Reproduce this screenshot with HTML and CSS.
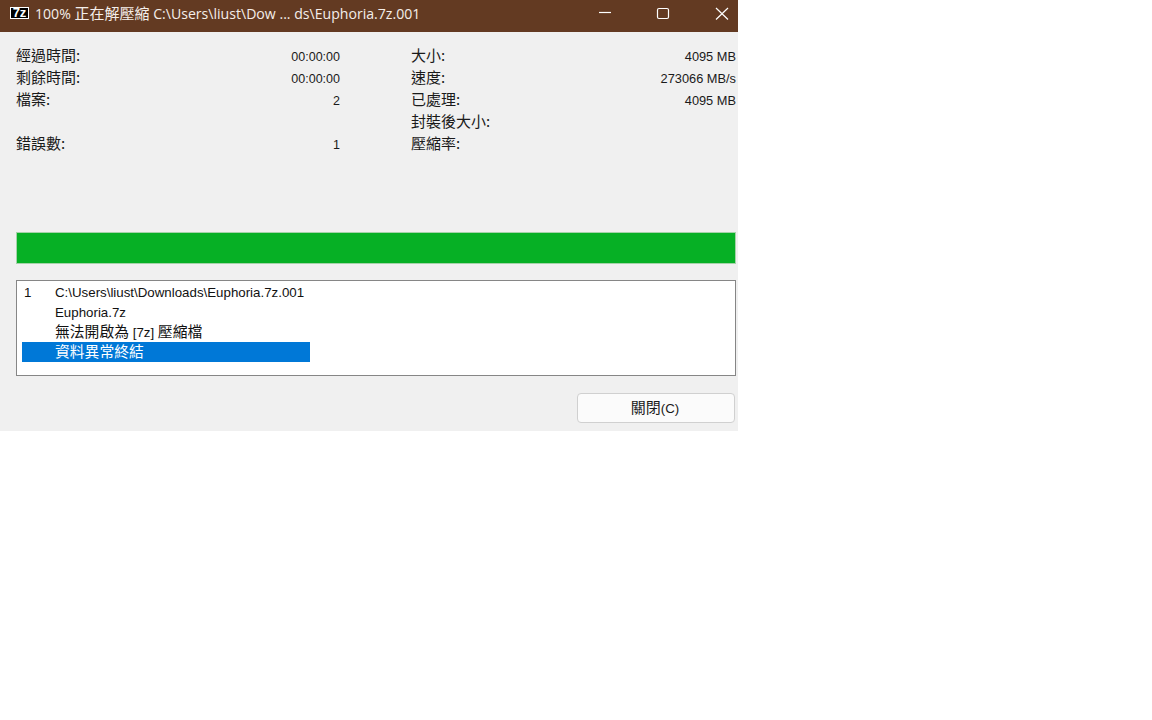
FILE: index.html
```html
<!DOCTYPE html>
<html lang="zh-Hant">
<head>
  <meta charset="UTF-8" />
  <title>7-Zip</title>
  <link rel="stylesheet" href="styles.css">
</head>
<body>

  <div class="window">
    <div class="titlebar">
      <div class="app-icon"><span>7</span><span>z</span></div>
      <div class="title">100% <span class="zh">正在解壓縮</span> C:\Users\liust\Dow ... ds\Euphoria.7z.001</div>
      <div class="controls">
        <svg width="46" height="26" viewBox="0 0 46 26"><path d="M16 12.500H28" stroke="#fff" stroke-width="1.200" fill="none" /></svg>
        <svg width="46" height="26" viewBox="0 0 46 26"><rect x="16.500" y="8.500" width="11" height="10" rx="1.500" stroke="#fff" stroke-width="1.200" fill="none" /></svg>
        <svg width="46" height="26" viewBox="0 0 46 26"><path d="M17 8L29 19.500M29 8L17 19.500" stroke="#fff" stroke-width="1.200" fill="none" /></svg>
      </div>
    </div>

    <div class="content">
      <div class="stats">
        <div class="stat-col">
          <div class="row"><span class="zh">經過時間:</span><span>00:00:00</span></div>
          <div class="row"><span class="zh">剩餘時間:</span><span>00:00:00</span></div>
          <div class="row"><span class="zh">檔案:</span><span>2</span></div>
          <div class="row"></div>
          <div class="row"><span class="zh">錯誤數:</span><span>1</span></div>
        </div>
        <div class="stat-col stat-col-right">
          <div class="row"><span class="zh">大小:</span><span>4095 MB</span></div>
          <div class="row"><span class="zh">速度:</span><span>273066 MB/s</span></div>
          <div class="row"><span class="zh">已處理:</span><span>4095 MB</span></div>
          <div class="row"><span class="zh">封裝後大小:</span></div>
          <div class="row"><span class="zh">壓縮率:</span></div>
        </div>
      </div>

      <div class="progress"></div>

      <div class="messages">
        <div class="msg"><span class="num">1</span><span>C:\Users\liust\Downloads\Euphoria.7z.001</span></div>
        <div class="msg"><span class="num"></span><span>Euphoria.7z</span></div>
        <div class="msg"><span class="num"></span><span class="mixed"><span class="zh">無法開啟為</span> [7z] <span class="zh">壓縮檔</span></span></div>
        <div class="msg selected"><span class="num"></span><span class="zh">資料異常終結</span></div>
      </div>

      <div class="footer">
        <button class="close-btn"><span class="zh">關閉</span>(C)</button>
      </div>
    </div>
  </div>

</body>
</html>
```

FILE: styles.css
```css
body {
  margin: 0;
  padding: 0;
  background-color: #fff;
  color: #1a1a1a;
  font-family: "Liberation Sans", "Noto Sans CJK TC", sans-serif;
  font-size: 12.5px;
}

.zh {
  font-family: "Noto Sans CJK TC", sans-serif;
  font-size: 15px;
  font-weight: 400;
  line-height: 1;
}

.window {
  width: 738px;
  height: 431px;
  background-color: #f0f0f0;
}

/* Title bar */
.titlebar {
  display: flex;
  align-items: center;
  height: 26px;
  padding: 0 0 6px 10px;
  background-color: #633a22;
  color: #f4eeea;
}

.app-icon {
  display: flex;
  justify-content: center;
  box-sizing: border-box;
  width: 19px;
  height: 12px;
  margin-right: 6px;
  border: 1px solid #fff;
  background-color: #000;
  color: #fff;
  font-size: 13px;
  font-weight: 700;
  line-height: 10px;
}

.title {
  flex: 1;
  font-family: "Open Sans", "Noto Sans CJK TC", sans-serif;
  font-size: 14.1px;
}

.controls {
  display: flex;
  gap: 12px;
  margin-right: -7px;
  height: 26px;
}

/* Stats */
.content {
  padding: 14px 2px 0 16px;
}

.stats {
  display: grid;
  grid-template-columns: 324px 325px;
  column-gap: 71px;
  height: 186px;
}

.stat-col-right {
  font-size: 12.8px;
}

.stat-col-right .row span:last-child:not(.zh) {
  margin-bottom: 2px;
}

.row {
  display: flex;
  justify-content: space-between;
  align-items: center;
  height: 22px;
}

.row .zh {
  margin-bottom: 6px;
}

/* Progress */
.progress {
  height: 30px;
  border: 1px solid #a5d3a9;
  background-color: #06b025;
}

/* Messages list */
.messages {
  height: 92px;
  margin-top: 16px;
  padding: 1px 0 1px 5px;
  border: 1px solid #868686;
  background-color: #fff;
  color: #111;
  font-size: 13.3px;
}

.messages .zh {
  font-size: 14.8px;
}

.msg {
  display: flex;
  align-items: center;
  width: 288px;
  height: 20px;
  white-space: nowrap;
}

.msg .num {
  width: 33px;
  padding-left: 2px;
  box-sizing: border-box;
}

.msg .mixed {
  margin-bottom: 1px;
}

.msg.selected {
  background-color: #0078d7;
  color: #fff;
}

.msg.selected .zh {
  margin-bottom: 1px;
}

/* Footer */
.footer {
  display: flex;
  justify-content: flex-end;
  margin-top: 17px;
  padding-right: 1px;
}

.close-btn {
  width: 158px;
  height: 30px;
  padding: 0 2px 2px 0;
  border: 1px solid #d0d0d0;
  border-radius: 4px;
  background-color: #fbfbfb;
  color: #1a1a1a;
  font-family: "Liberation Sans", sans-serif;
  font-size: 13.3px;
}
```
